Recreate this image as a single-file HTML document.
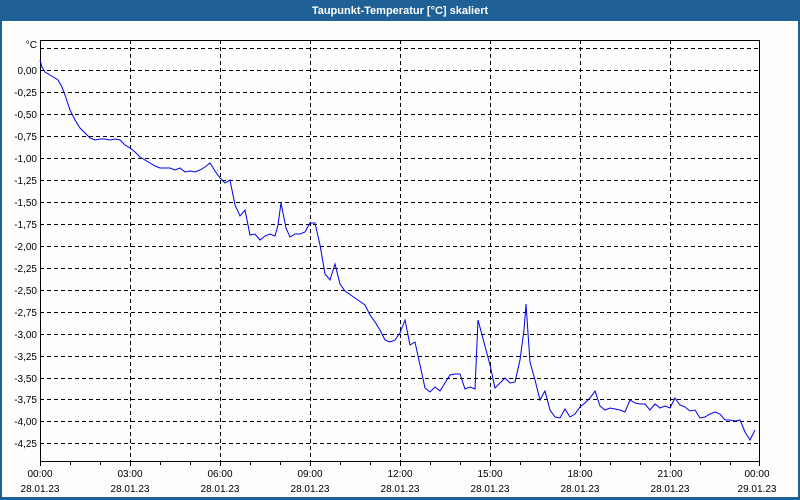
<!DOCTYPE html>
<html><head><meta charset="utf-8"><style>
html,body{margin:0;padding:0;width:800px;height:500px;overflow:hidden;background:#fcfdfc;font-family:"Liberation Sans",sans-serif}
</style></head><body>
<svg width="800" height="500" xmlns="http://www.w3.org/2000/svg" style="display:block">
<rect x="0" y="0" width="800" height="500" fill="#1f6096"/>
<rect x="2" y="21" width="796" height="476" fill="#fcfdfc"/>
<text x="400" y="14" fill="#ffffff" font-size="11" font-weight="bold" text-anchor="middle" font-family="Liberation Sans, sans-serif">Taupunkt-Temperatur [°C] skaliert</text>
<g stroke="#000" stroke-width="1" stroke-dasharray="4,3" shape-rendering="crispEdges">
<line x1="40" y1="48.5" x2="760" y2="48.5"/>
<line x1="40" y1="70.5" x2="760" y2="70.5"/>
<line x1="40" y1="92.5" x2="760" y2="92.5"/>
<line x1="40" y1="114.5" x2="760" y2="114.5"/>
<line x1="40" y1="136.5" x2="760" y2="136.5"/>
<line x1="40" y1="158.5" x2="760" y2="158.5"/>
<line x1="40" y1="180.5" x2="760" y2="180.5"/>
<line x1="40" y1="202.5" x2="760" y2="202.5"/>
<line x1="40" y1="224.5" x2="760" y2="224.5"/>
<line x1="40" y1="246.5" x2="760" y2="246.5"/>
<line x1="40" y1="268.5" x2="760" y2="268.5"/>
<line x1="40" y1="290.5" x2="760" y2="290.5"/>
<line x1="40" y1="312.5" x2="760" y2="312.5"/>
<line x1="40" y1="334.5" x2="760" y2="334.5"/>
<line x1="40" y1="356.5" x2="760" y2="356.5"/>
<line x1="40" y1="378.5" x2="760" y2="378.5"/>
<line x1="40" y1="399.5" x2="760" y2="399.5"/>
<line x1="40" y1="421.5" x2="760" y2="421.5"/>
<line x1="40" y1="443.5" x2="760" y2="443.5"/>
<line x1="130.5" y1="40" x2="130.5" y2="461"/>
<line x1="220.5" y1="40" x2="220.5" y2="461"/>
<line x1="310.5" y1="40" x2="310.5" y2="461"/>
<line x1="400.5" y1="40" x2="400.5" y2="461"/>
<line x1="490.5" y1="40" x2="490.5" y2="461"/>
<line x1="580.5" y1="40" x2="580.5" y2="461"/>
<line x1="670.5" y1="40" x2="670.5" y2="461"/>
</g>
<rect x="40.5" y="40.5" width="719" height="421" fill="none" stroke="#000" shape-rendering="crispEdges"/>
<g stroke="#000" shape-rendering="crispEdges">
<line x1="40.5" y1="461" x2="40.5" y2="466"/><line x1="70.5" y1="461" x2="70.5" y2="465"/><line x1="100.5" y1="461" x2="100.5" y2="465"/><line x1="130.5" y1="461" x2="130.5" y2="466"/>
<line x1="160.5" y1="461" x2="160.5" y2="465"/><line x1="190.5" y1="461" x2="190.5" y2="465"/><line x1="220.5" y1="461" x2="220.5" y2="466"/>
<line x1="250.5" y1="461" x2="250.5" y2="465"/><line x1="280.5" y1="461" x2="280.5" y2="465"/><line x1="310.5" y1="461" x2="310.5" y2="466"/>
<line x1="340.5" y1="461" x2="340.5" y2="465"/><line x1="370.5" y1="461" x2="370.5" y2="465"/><line x1="400.5" y1="461" x2="400.5" y2="466"/>
<line x1="430.5" y1="461" x2="430.5" y2="465"/><line x1="460.5" y1="461" x2="460.5" y2="465"/><line x1="490.5" y1="461" x2="490.5" y2="466"/>
<line x1="520.5" y1="461" x2="520.5" y2="465"/><line x1="550.5" y1="461" x2="550.5" y2="465"/><line x1="580.5" y1="461" x2="580.5" y2="466"/>
<line x1="610.5" y1="461" x2="610.5" y2="465"/><line x1="640.5" y1="461" x2="640.5" y2="465"/><line x1="670.5" y1="461" x2="670.5" y2="466"/>
<line x1="700.5" y1="461" x2="700.5" y2="465"/><line x1="730.5" y1="461" x2="730.5" y2="465"/><line x1="759.5" y1="461" x2="759.5" y2="466"/>
</g>
<g font-size="10" fill="#000" text-anchor="end" font-family="Liberation Sans, sans-serif">
<text x="37" y="48">°C</text>
<text x="37" y="74">0,00</text><text x="37" y="96">-0,25</text><text x="37" y="118">-0,50</text><text x="37" y="140">-0,75</text>
<text x="37" y="162">-1,00</text><text x="37" y="184">-1,25</text><text x="37" y="206">-1,50</text><text x="37" y="228">-1,75</text>
<text x="37" y="250">-2,00</text><text x="37" y="272">-2,25</text><text x="37" y="294">-2,50</text><text x="37" y="316">-2,75</text>
<text x="37" y="338">-3,00</text><text x="37" y="360">-3,25</text><text x="37" y="382">-3,50</text><text x="37" y="403">-3,75</text>
<text x="37" y="425">-4,00</text><text x="37" y="447">-4,25</text>
</g>
<g font-size="10" fill="#000" text-anchor="middle" font-family="Liberation Sans, sans-serif">
<text x="40" y="477">00:00</text><text x="40" y="492">28.01.23</text>
<text x="130" y="477">03:00</text><text x="130" y="492">28.01.23</text>
<text x="220" y="477">06:00</text><text x="220" y="492">28.01.23</text>
<text x="310" y="477">09:00</text><text x="310" y="492">28.01.23</text>
<text x="400" y="477">12:00</text><text x="400" y="492">28.01.23</text>
<text x="490" y="477">15:00</text><text x="490" y="492">28.01.23</text>
<text x="580" y="477">18:00</text><text x="580" y="492">28.01.23</text>
<text x="670" y="477">21:00</text><text x="670" y="492">28.01.23</text>
<text x="757" y="477">00:00</text><text x="757" y="492">29.01.23</text>
</g>
<polyline fill="none" stroke="#0000ee" stroke-width="1" points="40,60 42,67 45,72 50,75 55,78 58,80 62,87 66,98 70,110 75,120 80,128 85,133 90,138 95,140 100,139 105,139 110,140 115,139 120,140 125,145 130,148 135,152 140,157 145,160 150,163 155,166 160,168 165,168 170,168 175,170 180,168 185,172 190,171 195,172 200,170 205,167 210,163 215,171 220,178 225,183 230,180 235,205 240,216 245,210 250,235 255,234 260,240 265,236 270,234 275,236 278,225 281,203 286,228 290,237 295,234 300,234 305,232 310,223 315,223 320,245 325,274 330,280 335,264 340,284 345,291 355,298 365,305 370,315 375,322 380,330 385,340 390,342 395,340 400,333 405,320 410,345 415,342 420,365 425,388 430,392 435,387 440,391 450,375 455,374 460,374 465,389 470,387 475,389 478,320 482,335 490,365 495,388 505,378 510,383 515,382 520,360 524,330 526,304 530,362 535,380 540,400 545,391 550,410 555,417 560,418 565,409 570,417 575,414 580,407 585,403 590,398 595,391 600,406 605,410 610,408 615,409 620,410 625,412 630,400 635,403 640,404 645,404 650,410 655,404 660,408 665,406 670,408 675,398 680,405 685,407 690,411 695,410 700,418 705,417 710,414 715,412 720,414 725,420 730,420 735,421 740,420 745,432 750,440 755,430"/>
</svg>
</body></html>
